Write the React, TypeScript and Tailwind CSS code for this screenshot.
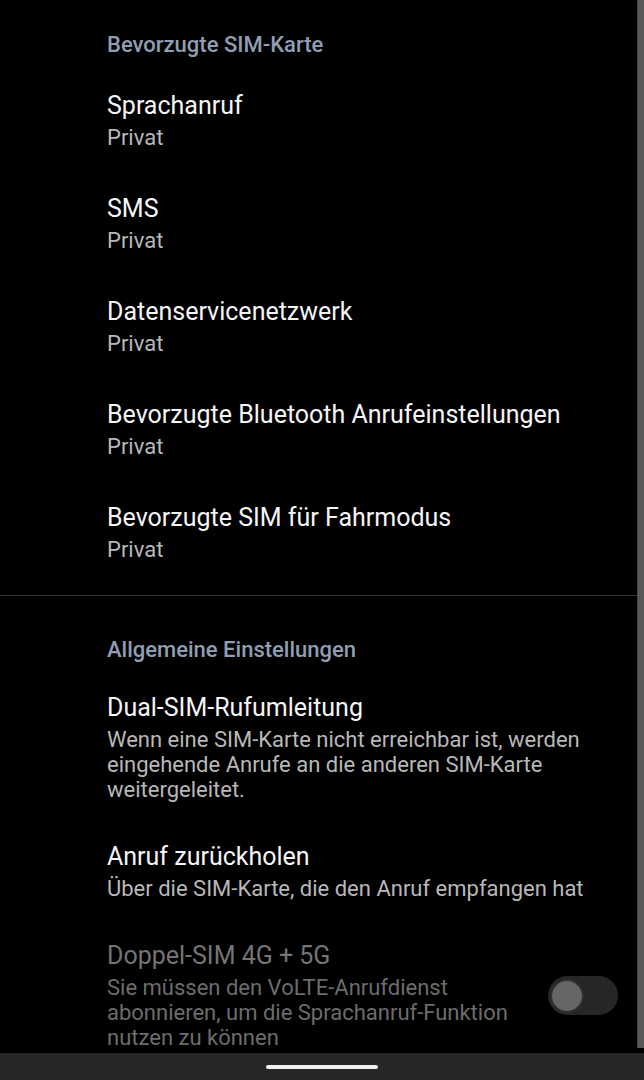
import React from "react";

const font = { fontFamily: "Roboto, 'Noto Sans', sans-serif" };

type Item = { title: string; sub: string };

const simItems: Item[] = [
  { title: "Sprachanruf", sub: "Privat" },
  { title: "SMS", sub: "Privat" },
  { title: "Datenservicenetzwerk", sub: "Privat" },
  { title: "Bevorzugte Bluetooth Anrufeinstellungen", sub: "Privat" },
  { title: "Bevorzugte SIM für Fahrmodus", sub: "Privat" },
];

const Header = ({ text }: { text: string }) => (
  <div className="pl-[107px] text-[22px] leading-[24px] font-medium text-[#909eb3]">{text}</div>
);

const Row = ({ title, sub, pad }: Item & { pad: string }) => (
  <div className={`pl-[107px] pr-6 ${pad}`}>
    <div className="text-[25px] leading-[30px] text-[#f5f5f5]">{title}</div>
    <div className="mt-[4px] text-[22px] leading-[25px] text-[#b8b8b8]">{sub}</div>
  </div>
);

const App = () => {
  return (
    <div className="w-[644px] h-[1080px] bg-black flex flex-col overflow-hidden" style={font}>
      <div className="flex-1 flex min-h-0">
        <div className="flex-1 overflow-hidden">
          {/* Bevorzugte SIM-Karte */}
          <div className="pt-[33px]">
            <Header text="Bevorzugte SIM-Karte" />
            <div className="mt-[12px]">
              {simItems.map((it) => (
                <Row key={it.title} title={it.title} sub={it.sub} pad="py-[22px]" />
              ))}
            </div>
          </div>
          <div className="mt-[11px] h-px bg-[#333333]" />

          {/* Allgemeine Einstellungen */}
          <div className="pt-[42px]">
            <Header text="Allgemeine Einstellungen" />
            <div className="mt-[11px]">
              <Row
                title="Dual-SIM-Rufumleitung"
                sub="Wenn eine SIM-Karte nicht erreichbar ist, werden eingehende Anrufe an die anderen SIM-Karte weitergeleitet."
                pad="py-[20px]"
              />
              <Row
                title="Anruf zurückholen"
                sub="Über die SIM-Karte, die den Anruf empfangen hat"
                pad="py-[20px]"
              />
              <div className="pl-[107px] pr-[19px] py-[20px] flex items-center gap-4">
                <div className="flex-1">
                  <div className="text-[25px] leading-[30px] text-[#747474]">Doppel-SIM 4G + 5G</div>
                  <div className="mt-[4px] text-[22px] leading-[25px] text-[#6c6c6c]">
                    Sie müssen den VoLTE-Anrufdienst abonnieren, um die Sprachanruf-Funktion nutzen zu können
                  </div>
                </div>
                <div className="w-[70px] h-[39px] rounded-full bg-[#262626] flex items-center pl-[2px] shrink-0">
                  <div className="w-[34px] h-[34px] rounded-full bg-[#666666] border-[2px] border-[#2f2f2f]" />
                </div>
              </div>
            </div>
          </div>
        </div>
        <div className="w-[7px] h-[1048px] bg-[#595959] border-l border-[#444444]" />
      </div>
      <div className="h-[27px] bg-[#262626] flex items-center justify-center">
        <div className="w-[112px] h-[4px] rounded-full bg-[#f0f0f0]" />
      </div>
    </div>
  );
};

export default App;
